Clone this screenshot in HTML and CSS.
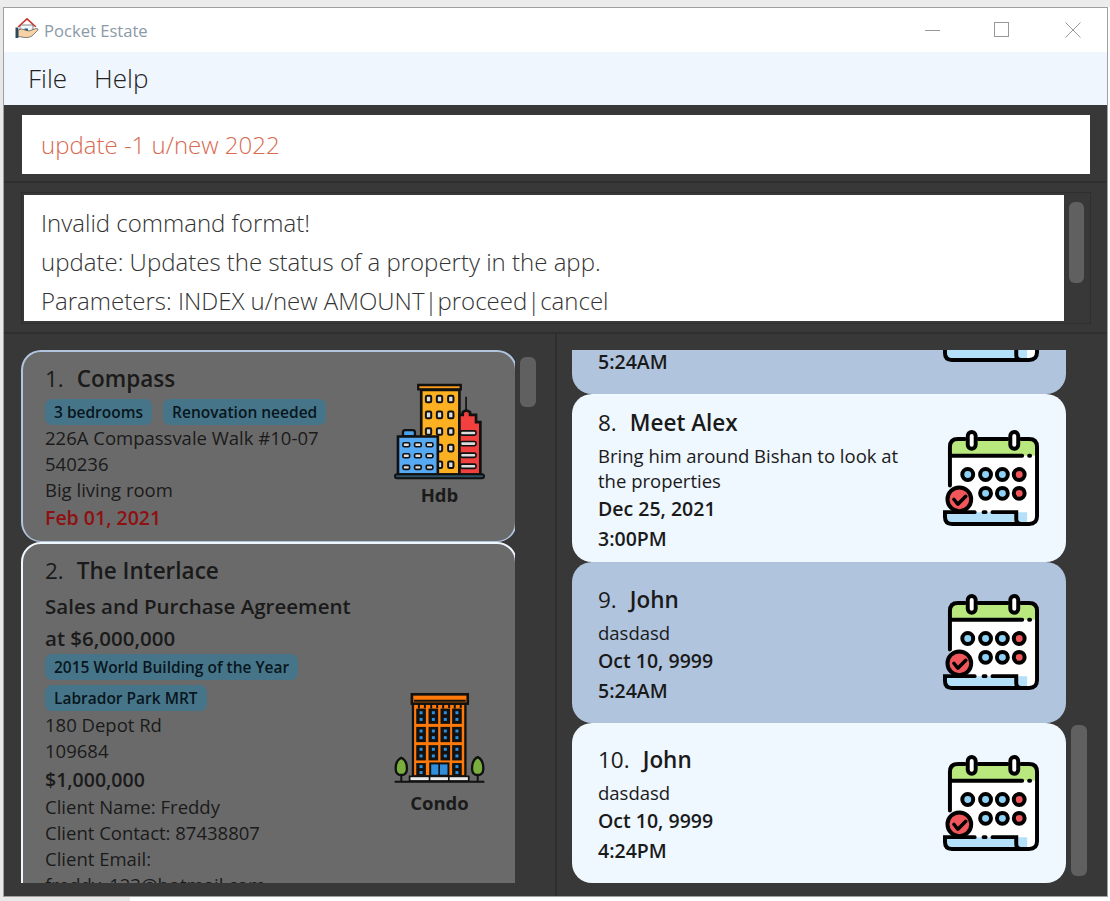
FILE: index.html
```html
<!DOCTYPE html>
<html lang="en">
<head>
  <meta charset="UTF-8">
  <meta name="viewport" content="width=device-width, initial-scale=1.0">
  <title>Pocket Estate</title>
  <link rel="stylesheet" href="styles.css">
</head>
<body>

  <svg class="defs" width="0" height="0">
    <symbol id="calendar" viewBox="0 0 98 97">
      <path d="M7 26V17q0-8 8-8h72q8 0 8 8v9z" fill="#b9e87f"/>
      <path d="M7 26h88v61q0 8-8 8H7z" fill="#fff"/>
      <path d="M3 83h82v12H9q-6 0-6-6z" fill="#b5e0fa"/>
      <path d="M7 56V17q0-8 8-8h7M36 9h29M79 9h8q8 0 8 8v70q0 8-8 8H9q-7 0-7-7v-5h30M41 83h2M50 83h24v7q0 5 5 5M9 26h71M87 26h1" fill="none" stroke="#000" stroke-width="4" stroke-linecap="round"/>
      <rect x="25" y="2" width="8" height="17" rx="4" fill="#fff" stroke="#000" stroke-width="4"/>
      <rect x="68" y="2" width="8" height="17" rx="4" fill="#fff" stroke="#000" stroke-width="4"/>
      <g stroke="#000" stroke-width="4">
        <circle cx="25" cy="45" r="5.500" fill="#8ed3f7"/>
        <circle cx="43" cy="45" r="5.500" fill="#8ed3f7"/>
        <circle cx="60" cy="45" r="5.500" fill="#8ed3f7"/>
        <circle cx="77" cy="45" r="5.500" fill="#f0565a"/>
        <circle cx="43" cy="64" r="5.500" fill="#8ed3f7"/>
        <circle cx="60" cy="64" r="5.500" fill="#8ed3f7"/>
        <circle cx="77" cy="64" r="5.500" fill="#f0565a"/>
        <circle cx="16.500" cy="70" r="12" fill="#f0565a"/>
      </g>
      <path d="M11 70l4 5 8-8" fill="none" stroke="#000" stroke-width="3.500" stroke-linecap="round" stroke-linejoin="round"/>
    </symbol>

    <symbol id="hdb" viewBox="40 40 280 290">
      <path d="M116 45h128v13H116z" fill="#f59a1c" stroke="#111" stroke-width="7"/>
      <path d="M125 60h115v255H125z" fill="#fdb022" stroke="#111" stroke-width="8"/>
      <g fill="#ddd" stroke="#111" stroke-width="6">
        <rect x="139" y="77" width="16" height="20" rx="4"/><rect x="172" y="77" width="16" height="20" rx="4"/><rect x="206" y="77" width="16" height="20" rx="4"/>
        <rect x="139" y="125" width="16" height="20" rx="4"/><rect x="172" y="125" width="16" height="20" rx="4"/><rect x="206" y="125" width="16" height="20" rx="4"/>
        <rect x="139" y="175" width="16" height="20" rx="4"/><rect x="172" y="175" width="16" height="20" rx="4"/><rect x="206" y="175" width="16" height="20" rx="4"/>
        <rect x="172" y="225" width="16" height="20" rx="4"/><rect x="206" y="225" width="16" height="20" rx="4"/>
        <rect x="172" y="275" width="16" height="20" rx="4"/><rect x="206" y="275" width="16" height="20" rx="4"/>
      </g>
      <path d="M260 80v40" stroke="#111" stroke-width="5"/>
      <path d="M240 315V135h10v-8q10-10 22 0v8h18v22h13v158z" fill="#f2403f" stroke="#111" stroke-width="8"/>
      <g fill="#ddd" stroke="#111" stroke-width="5">
        <rect x="243" y="183" width="47" height="13" rx="5"/><rect x="243" y="215" width="47" height="13" rx="5"/>
        <rect x="243" y="250" width="47" height="13" rx="5"/><rect x="243" y="283" width="47" height="13" rx="5"/>
      </g>
      <path d="M70 200v-12q0-7 7-7h22q7 0 7 7v12z" fill="#4aa3ef" stroke="#111" stroke-width="7"/>
      <path d="M55 200h120v115H55z" fill="#56a9f3" stroke="#111" stroke-width="8"/>
      <g fill="#ddd" stroke="#111" stroke-width="5">
        <rect x="70" y="219" width="20" height="12" rx="4"/><rect x="105" y="219" width="20" height="12" rx="4"/><rect x="140" y="219" width="20" height="12" rx="4"/>
        <rect x="70" y="252" width="20" height="12" rx="4"/><rect x="105" y="252" width="20" height="12" rx="4"/><rect x="140" y="252" width="20" height="12" rx="4"/>
        <rect x="70" y="287" width="20" height="12" rx="4"/><rect x="105" y="287" width="20" height="12" rx="4"/><rect x="140" y="287" width="20" height="12" rx="4"/>
      </g>
      <rect x="46" y="314" width="268" height="12" rx="6" fill="#2c5064" stroke="#111" stroke-width="6"/>
    </symbol>

    <symbol id="condo" viewBox="40 35 280 275">
      <path d="M100 68h158v220H100z" fill="#ff7a0a" stroke="#111" stroke-width="7"/>
      <rect x="97" y="41" width="168" height="28" fill="#ff7a0a" stroke="#111" stroke-width="8"/>
      <path d="M103 60h156" stroke="#111" stroke-width="6"/>
      <path d="M118 70v14M155 70v14M191 70v14M226 70v14M136 70v12M173 70v12M209 70v12M244 70v12" stroke="#111" stroke-width="6"/>
      <g fill="#111">
        <rect x="110" y="84" width="29" height="46"/><rect x="147" y="84" width="29" height="46"/><rect x="183" y="84" width="29" height="46"/><rect x="218" y="84" width="29" height="46"/>
        <rect x="110" y="139" width="29" height="46"/><rect x="147" y="139" width="29" height="46"/><rect x="183" y="139" width="29" height="46"/><rect x="218" y="139" width="29" height="46"/>
        <rect x="110" y="194" width="29" height="46"/><rect x="147" y="194" width="29" height="46"/><rect x="183" y="194" width="29" height="46"/><rect x="218" y="194" width="29" height="46"/>
        <rect x="110" y="248" width="29" height="38"/><rect x="218" y="248" width="29" height="38"/>
      </g>
      <g fill="#2f8fdc">
        <rect x="120" y="92" width="9" height="9"/><rect x="120" y="112" width="9" height="9"/>
        <rect x="157" y="92" width="9" height="9"/><rect x="157" y="112" width="9" height="9"/>
        <rect x="193" y="92" width="9" height="9"/><rect x="193" y="112" width="9" height="9"/>
        <rect x="228" y="92" width="9" height="9"/><rect x="228" y="112" width="9" height="9"/>
        <rect x="120" y="147" width="9" height="9"/><rect x="120" y="167" width="9" height="9"/>
        <rect x="157" y="147" width="9" height="9"/><rect x="157" y="167" width="9" height="9"/>
        <rect x="193" y="147" width="9" height="9"/><rect x="193" y="167" width="9" height="9"/>
        <rect x="228" y="147" width="9" height="9"/><rect x="228" y="167" width="9" height="9"/>
        <rect x="120" y="202" width="9" height="9"/><rect x="120" y="222" width="9" height="9"/>
        <rect x="157" y="202" width="9" height="9"/><rect x="157" y="222" width="9" height="9"/>
        <rect x="193" y="202" width="9" height="9"/><rect x="193" y="222" width="9" height="9"/>
        <rect x="228" y="202" width="9" height="9"/><rect x="228" y="222" width="9" height="9"/>
        <rect x="120" y="254" width="9" height="9"/><rect x="120" y="272" width="9" height="9"/>
        <rect x="228" y="254" width="9" height="9"/><rect x="228" y="272" width="9" height="9"/>
      </g>
      <rect x="152" y="249" width="55" height="37" fill="#2f8fdc" stroke="#111" stroke-width="6"/>
      <path d="M179 249v37" stroke="#111" stroke-width="5"/>
      <rect x="90" y="288" width="178" height="14" fill="#ececec" stroke="#111" stroke-width="5"/>
      <path d="M150 288v14M208 288v14" stroke="#111" stroke-width="5"/>
      <path d="M45 304h270M65 270v34M295 270v34" stroke="#111" stroke-width="6"/>
      <path d="M65 232q17 8 17 32 0 20-17 20t-17-20q0-24 17-32zM295 230q17 8 17 34 0 20-17 20t-17-20q0-26 17-34z" fill="#79ad3e" stroke="#111" stroke-width="7"/>
    </symbol>
  </svg>

  <div class="window">
    <div class="title-bar">
      <svg class="app-logo" viewBox="0 0 24 22">
        <path d="M5 8h13v9H5z" fill="#f2f7fb" stroke="#33373d" stroke-width=".6"/>
        <path d="M9.500 17v-5.500h3.500V17z" fill="#2d5f86"/>
        <path d="M2.500 9.500 12 .8l9.500 8.700-1.300.8L12 3 3.800 10.300z" fill="#c8352f"/>
        <path d="M3 13q4-2 7 0l4 1 7-2.500q2.500 0 2 1.500l-6 6q-3 2-7 1.500l-7-1z" fill="#f7d2a6" stroke="#33373d" stroke-width=".6"/>
        <path d="M.5 10.500h2.800v10.500H.5z" fill="#2c4a5e"/>
      </svg>
      <span class="app-name">Pocket Estate</span>
      <div class="win-controls">
        <span class="win-btn min-btn"><svg width="16" height="16"><path d="M0 8.500h15" stroke="#999" stroke-width="1"/></svg></span>
        <span class="win-btn"><svg width="16" height="16"><rect x=".5" y=".5" width="14" height="14" fill="none" stroke="#999"/></svg></span>
        <span class="win-btn"><svg width="16" height="16"><path d="M.5.5l15 15M15.500.5l-15 15" stroke="#999" stroke-width="1"/></svg></span>
      </div>
    </div>

    <div class="menu-bar">
      <span>File</span>
      <span>Help</span>
    </div>

    <div class="main">
      <div class="command-pane">
        <div class="command-box">update -1 u/new 2022</div>
      </div>

      <div class="result-pane">
        <div class="result-frame">
          <div class="result-text">
            <div>Invalid command format!</div>
            <div>update: Updates the status of a property in the app.</div>
            <div>Parameters: INDEX u/new AMOUNT|proceed|cancel</div>
          </div>
          <div class="result-track"><div class="thumb"></div></div>
        </div>
      </div>

      <div class="lists">
        <div class="list-pane left-pane">
          <div class="list">
            <div class="card property first">
              <div class="card-body">
                <div class="card-title"><span class="num">1.</span>Compass</div>
                <div class="tags"><span class="tag">3 bedrooms</span><span class="tag">Renovation needed</span></div>
                <div class="line">226A Compassvale Walk #10-07</div>
                <div class="line">540236</div>
                <div class="line">Big living room</div>
                <div class="date-due">Feb 01, 2021</div>
              </div>
              <div class="type">
                <svg class="type-icon hdb-icon"><use href="#hdb"/></svg>
                <div class="type-name">Hdb</div>
              </div>
            </div>

            <div class="card property second">
              <div class="card-body">
                <div class="card-title"><span class="num">2.</span>The Interlace</div>
                <div class="status">Sales and Purchase Agreement</div>
                <div class="status">at $6,000,000</div>
                <div class="tags"><span class="tag">2015 World Building of the Year</span></div>
                <div class="tags"><span class="tag">Labrador Park MRT</span></div>
                <div class="line">180 Depot Rd</div>
                <div class="line">109684</div>
                <div class="price">$1,000,000</div>
                <div class="line">Client Name: Freddy</div>
                <div class="line">Client Contact: 87438807</div>
                <div class="line">Client Email:</div>
                <div class="line">freddy_123@hotmail.com</div>
              </div>
              <div class="type">
                <svg class="type-icon condo-icon"><use href="#condo"/></svg>
                <div class="type-name">Condo</div>
              </div>
            </div>
          </div>
          <div class="track"><div class="thumb left-thumb"></div></div>
        </div>

        <div class="list-pane right-pane">
          <div class="list to-bottom">
            <div class="card event even">
              <div class="card-body">
                <div class="card-title"><span class="num">7.</span>John</div>
                <div class="line">dasdasd</div>
                <div class="when">Oct 10, 9999</div>
                <div class="when">5:24AM</div>
              </div>
              <svg class="cal-icon"><use href="#calendar"/></svg>
            </div>

            <div class="card event odd">
              <div class="card-body">
                <div class="card-title"><span class="num">8.</span>Meet Alex</div>
                <div class="line wrap">Bring him around Bishan to look at the properties</div>
                <div class="when">Dec 25, 2021</div>
                <div class="when">3:00PM</div>
              </div>
              <svg class="cal-icon"><use href="#calendar"/></svg>
            </div>

            <div class="card event even">
              <div class="card-body">
                <div class="card-title"><span class="num">9.</span>John</div>
                <div class="line">dasdasd</div>
                <div class="when">Oct 10, 9999</div>
                <div class="when">5:24AM</div>
              </div>
              <svg class="cal-icon"><use href="#calendar"/></svg>
            </div>

            <div class="card event odd">
              <div class="card-body">
                <div class="card-title"><span class="num">10.</span>John</div>
                <div class="line">dasdasd</div>
                <div class="when">Oct 10, 9999</div>
                <div class="when">4:24PM</div>
              </div>
              <svg class="cal-icon"><use href="#calendar"/></svg>
            </div>
          </div>
          <div class="track to-end"><div class="thumb right-thumb"></div></div>
        </div>
      </div>
    </div>
  </div>

</body>
</html>
```

FILE: styles.css
```css
html, body {
  margin: 0;
  padding: 0;
  height: 100%;
  overflow: hidden;
}

body {
  background: linear-gradient(#ececec 7px, transparent 7px), linear-gradient(90deg, #e8e8e8 130px, #fff 130px);
  font-family: "Open Sans", "Noto Sans", sans-serif;
  color: #1a1a1a;
}

.defs {
  position: absolute;
}

.window {
  box-sizing: border-box;
  width: 1105px;
  height: 890px;
  margin: 7px 0 0 3px;
  border: 1px solid #a0a0a0;
  display: flex;
  flex-direction: column;
  overflow: hidden;
}

/* title bar */
.title-bar {
  height: 44px;
  flex: none;
  background-color: #fff;
  display: flex;
  align-items: center;
  padding-left: 11px;
}

.app-logo {
  width: 24px;
  height: 22px;
  margin-top: -4px;
}

.app-name {
  margin-left: 5px;
  font-size: 16.600px;
  color: #8b9aa8;
}

.win-controls {
  margin-left: auto;
  display: flex;
  gap: 55px;
  padding-right: 26px;
  margin-top: -2px;
}

.win-btn {
  display: block;
  width: 16px;
  height: 16px;
}

.min-btn {
  margin-right: -2px;
}

/* menu */
.menu-bar {
  height: 53px;
  flex: none;
  box-sizing: border-box;
  padding: 0 0 2px 24px;
  background-color: #eff6fe;
  display: flex;
  align-items: center;
  gap: 27px;
  font-size: 26px;
  font-weight: 300;
  color: #222;
}

.main {
  flex: 1;
  min-height: 0;
  background-color: #383838;
  display: flex;
  flex-direction: column;
}

/* command box */
.command-pane {
  height: 78px;
  flex: none;
  box-sizing: border-box;
  padding: 10px 17px 9px 18px;
  border-bottom: 2px solid #2f2f2f;
}

.command-box {
  height: 59px;
  box-sizing: border-box;
  background-color: #fff;
  padding-left: 19px;
  line-height: 59px;
  font-size: 24px;
  font-weight: 300;
  color: #d9694f;
}

/* result box */
.result-pane {
  height: 151px;
  flex: none;
  box-sizing: border-box;
  padding: 9px 16px 8px 17px;
  border-bottom: 2px solid #2f2f2f;
}

.result-frame {
  height: 132px;
  box-sizing: border-box;
  border: 1px solid #2f2f2f;
  padding: 2px 0 2px 2px;
  display: flex;
}

.result-text {
  width: 1040px;
  flex: none;
  background-color: #fff;
  box-sizing: border-box;
  padding: 8px 0 0 17px;
  overflow: hidden;
  font-size: 24px;
  font-weight: 300;
  line-height: 39px;
  color: #333;
  white-space: nowrap;
}

.result-track {
  padding: 7px 0 0 5px;
}

.result-track .thumb {
  width: 15px;
  height: 81px;
}

.thumb {
  background-color: #606060;
  border-radius: 6px;
}

/* lists */
.lists {
  flex: 1;
  min-height: 0;
  display: flex;
}

.list-pane {
  box-sizing: border-box;
  height: 100%;
  display: flex;
  padding: 16px 0 13px;
}

.left-pane {
  width: 553px;
  padding-left: 17px;
  border-right: 2px solid #2f2f2f;
}

.right-pane {
  flex: 1;
  min-width: 0;
  padding-left: 15px;
}

.list {
  width: 494px;
  flex: none;
  height: 100%;
  overflow: hidden;
  display: flex;
  flex-direction: column;
}

.to-bottom {
  justify-content: flex-end;
}

.track {
  display: flex;
  flex-direction: column;
  padding-left: 5px;
}

.to-end {
  justify-content: flex-end;
  padding-bottom: 7px;
}

.left-thumb {
  width: 16px;
  height: 50px;
  margin-top: 7px;
}

.right-thumb {
  width: 16px;
  height: 151px;
}

/* cards */
.card {
  box-sizing: border-box;
  flex: none;
  display: flex;
  align-items: center;
  border-radius: 20px;
}

.card-body {
  flex: 1;
  min-width: 0;
  align-self: flex-start;
}

.card-title {
  font-size: 22.500px;
  font-weight: 600;
  line-height: 32px;
}

.num {
  margin-right: 13px;
  font-weight: 500;
}

.line {
  font-size: 18.500px;
  line-height: 26px;
}

/* property cards: the list clips their right border */
.property {
  width: 496px;
  background-color: #6a6a6a;
  border: 2px solid #b0c4de;
  padding: 0 29px 0 22px;
}

.property.first {
  height: 192px;
  border-bottom-width: 1px;
}

.property.second {
  height: 426px;
  border-color: #f0f8ff;
}

.property .card-body {
  padding-top: 11px;
}

.tags {
  display: flex;
  gap: 11px;
}

.card-title + .tags {
  margin-top: 4px;
}

.tags + .tags {
  margin: 5px 0 1px;
}

.tag {
  height: 26px;
  line-height: 26px;
  padding: 0 9px;
  border-radius: 7px;
  background-color: #46758a;
  color: #08151c;
  font-size: 15.500px;
  font-weight: 600;
  white-space: nowrap;
}

.date-due {
  color: #8f1012;
  font-size: 19.500px;
  font-weight: 600;
  line-height: 30px;
}

.status {
  font-size: 20.500px;
  font-weight: 600;
  line-height: 32px;
}

.card-title + .status {
  margin-top: 3px;
}

.price {
  font-size: 19.500px;
  font-weight: 600;
  line-height: 30px;
  margin: 1px 0 -1px;
}

.type {
  width: 93px;
  flex: none;
  display: flex;
  flex-direction: column;
  align-items: center;
}

.type-icon {
  display: block;
  width: 93px;
}

.hdb-icon {
  height: 97px;
}

.condo-icon {
  height: 92px;
  margin-bottom: 4px;
}

.type-name {
  font-size: 18.500px;
  font-weight: 700;
  line-height: 30px;
}

/* event cards */
.event {
  min-height: 160.500px;
  padding: 13px 26px 8px 26px;
}

.event .card-body {
  align-self: center;
}

.event .card-title {
  margin-bottom: 4px;
}

.event.even {
  background-color: #b0c4de;
}

.event.odd {
  background-color: #eff7ff;
}

.event .line {
  line-height: 25px;
}

.event .line + .when {
  margin-top: 1px;
}

.wrap {
  width: 320px;
}

.when {
  font-size: 19.500px;
  font-weight: 600;
  line-height: 30px;
}

.cal-icon {
  width: 97px;
  height: 96px;
  flex: none;
  margin-top: -13px;
  margin-bottom: -8px;
}
```
